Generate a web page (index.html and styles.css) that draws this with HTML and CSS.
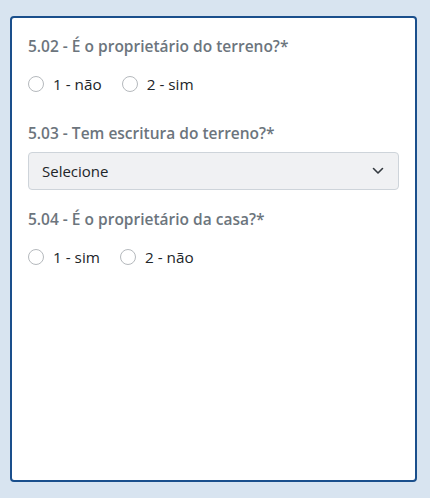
FILE: index.html
```html
<!DOCTYPE html>
<html lang="pt">
<head>
<meta charset="utf-8">
<link rel="stylesheet" href="styles.css">
</head>
<body>
<div class="card">
  <div class="field">
    <div class="label">5.02 - É o proprietário do terreno?*</div>
    <div class="options">
      <label class="opt"><span class="radio"></span>1 - não</label>
      <label class="opt"><span class="radio"></span>2 - sim</label>
    </div>
  </div>
  <div class="field">
    <div class="label">5.03 - Tem escritura do terreno?*</div>
    <div class="select">
      <span>Selecione</span>
      <svg class="chev" width="12" height="8" viewBox="0 0 12 8"><path d="M1.5 1.5 L6 6 L10.5 1.5" fill="none" stroke="#343a40" stroke-width="1.6" stroke-linecap="round" stroke-linejoin="round"/></svg>
    </div>
  </div>
  <div class="field">
    <div class="label">5.04 - É o proprietário da casa?*</div>
    <div class="options">
      <label class="opt"><span class="radio"></span>1 - sim</label>
      <label class="opt"><span class="radio"></span>2 - não</label>
    </div>
  </div>
</div>
</body>
</html>
```
FILE: styles.css
```css
html, body {
  margin: 0;
  padding: 0;
  background: #d8e4f0;
}
body {
  padding: 16px 13px 16px 10px;
  font-family: "Open Sans", "Noto Sans", sans-serif;
}
.card {
  box-sizing: border-box;
  height: 466px;
  background: #fff;
  border: 2px solid #1a4f8c;
  border-radius: 4px;
  padding: 18px 16px;
  display: flex;
  flex-direction: column;
  gap: 19px;
}
.label {
  font-size: 15.5px;
  font-weight: 600;
  color: #6c757d;
  line-height: 20px;
  margin-bottom: 18px;
}
.options {
  display: flex;
  gap: 20px;
  font-size: 15.3px;
  color: #212529;
  line-height: 20px;
  margin-bottom: 10px;
}
.opt {
  display: flex;
  align-items: center;
  gap: 9px;
}
.radio {
  width: 14px;
  height: 14px;
  border: 1px solid #b5b9bd;
  border-radius: 50%;
  background: #fff;
}
.select {
  box-sizing: border-box;
  height: 38px;
  margin-top: -9px;
  border: 1px solid #ced4da;
  border-radius: 4px;
  background: #f0f1f3;
  display: flex;
  align-items: center;
  justify-content: space-between;
  padding: 0 14px 0 13px;
  font-size: 15px;
  color: #212529;
}
```
